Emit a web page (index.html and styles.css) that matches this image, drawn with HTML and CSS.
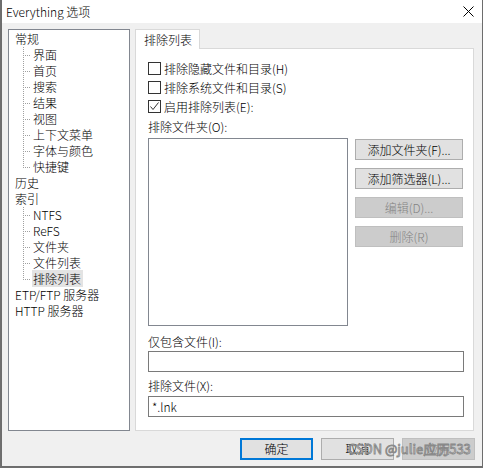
FILE: index.html
```html
<!DOCTYPE html>
<html lang="zh-CN">

<head>
    <meta charset="UTF-8">
    <meta name="viewport" content="width=device-width, initial-scale=1.0">
    <title>Everything 选项</title>
    <link rel="stylesheet" href="styles.css">
</head>

<body>
    <div class="window">
        <div class="titlebar">
            <span class="title">Everything 选项</span>
            <svg class="close" width="11" height="11" viewBox="0 0 11 11">
                <path d="M0.5 0.5 L10.5 10.5 M10.5 0.5 L0.5 10.5" stroke="#000" stroke-width="1" fill="none" />
            </svg>
        </div>

        <div class="client">
            <div class="main">
                <!-- options tree -->
                <div class="tree">
                    <ul>
                        <li>常规
                            <ul class="children">
                                <li>界面</li>
                                <li>首页</li>
                                <li>搜索</li>
                                <li>结果</li>
                                <li>视图</li>
                                <li>上下文菜单</li>
                                <li>字体与颜色</li>
                                <li class="last">快捷键</li>
                            </ul>
                        </li>
                        <li>历史</li>
                        <li>索引
                            <ul class="children">
                                <li>NTFS</li>
                                <li>ReFS</li>
                                <li>文件夹</li>
                                <li>文件列表</li>
                                <li class="last"><span class="selected">排除列表</span></li>
                            </ul>
                        </li>
                        <li>ETP/FTP 服务器</li>
                        <li>HTTP 服务器</li>
                    </ul>
                </div>

                <!-- tab page -->
                <div class="tabs">
                    <div class="tabstrip">
                        <div class="tab">排除列表</div>
                    </div>
                    <div class="page">
                        <div class="check"><span class="box"></span>排除隐藏文件和目录(H)</div>
                        <div class="check"><span class="box"></span>排除系统文件和目录(S)</div>
                        <div class="check">
                            <span class="box">
                                <svg width="11" height="11" viewBox="0 0 11 11">
                                    <path d="M1.5 5.5 L4 8.5 L9.5 1.5" stroke="#333" stroke-width="1" fill="none" />
                                </svg>
                            </span>启用排除列表(E):
                        </div>

                        <div class="label first-label">排除文件夹(O):</div>
                        <div class="folders">
                            <div class="listbox"></div>
                            <div class="side-buttons">
                                <button class="btn">添加文件夹(F)...</button>
                                <button class="btn">添加筛选器(L)...</button>
                                <button class="btn" disabled>编辑(D)...</button>
                                <button class="btn" disabled>删除(R)</button>
                            </div>
                        </div>

                        <div class="label include-label">仅包含文件(I):</div>
                        <div class="textbox include-box"></div>
                        <div class="label exclude-label">排除文件(X):</div>
                        <div class="textbox exclude-box">*.lnk</div>
                    </div>
                </div>
            </div>

            <div class="buttons">
                <button class="btn dialog-btn default">确定</button>
                <button class="btn dialog-btn">取消</button>
                <button class="btn dialog-btn" disabled>应用</button>
            </div>
        </div>

        <div class="watermark">CSDN @julie应历533</div>
    </div>
</body>

</html>
```

FILE: styles.css
```css
body {
    margin: 0;
    padding: 0;
    background-color: #6f6f6f;
    font-family: "Noto Sans CJK SC", sans-serif;
    font-size: 12px;
    font-weight: 300;
    color: #000;
}

.window {
    position: relative;
    box-sizing: border-box;
    width: 482px;
    height: 467px;
    margin-left: 1px;
    background-color: #f0f0f0;
    border: 1px solid #6d6d6d;
    border-top: none;
}

/* title bar */
.titlebar {
    display: flex;
    align-items: center;
    justify-content: space-between;
    height: 23px;
    background-color: #fff;
    padding-left: 4px;
}

.title {
    font-size: 12px;
    line-height: 23px;
}

.close {
    display: block;
    margin-right: 8px;
}

.client {
    padding: 6px 7px 0 6px;
}

.main {
    display: flex;
    gap: 5px;
}

/* tree */
.tree {
    box-sizing: border-box;
    width: 122px;
    height: 402px;
    background-color: #fff;
    border: 1px solid #828790;
    padding-top: 1px;
}

.tree ul {
    list-style: none;
    margin: 0;
    padding: 0;
}

.tree li {
    line-height: 16px;
    padding-left: 6px;
    white-space: nowrap;
}

.tree .children li {
    padding-left: 18px;
    background-image:
        repeating-linear-gradient(to bottom, #a0a0a0 0 1px, transparent 1px 2px),
        repeating-linear-gradient(to right, #a0a0a0 0 1px, transparent 1px 2px);
    background-size: 1px 16px, 8px 1px;
    background-position: 8px 0, 8px 8px;
    background-repeat: no-repeat;
}

.tree .children li.last {
    background-size: 1px 9px, 8px 1px;
}

.selected {
    background-color: #e3e3e3;
    padding: 0 2px 0 1px;
    margin-left: -1px;
}

/* tab control */
.tabs {
    width: 339px;
}

.tabstrip {
    display: flex;
    height: 19px;
}

.tab {
    position: relative;
    box-sizing: border-box;
    width: 65px;
    height: 20px;
    background-color: #fff;
    border: 1px solid #d9d9d9;
    border-bottom: none;
    padding-left: 8px;
    line-height: 19px;
    z-index: 1;
}

.page {
    box-sizing: border-box;
    height: 383px;
    background-color: #fff;
    border: 1px solid #d9d9d9;
    padding: 13px 10px 0 12px;
}

.check {
    display: flex;
    align-items: center;
    height: 13px;
    line-height: 13px;
    margin-bottom: 6px;
}

.box {
    display: flex;
    align-items: center;
    justify-content: center;
    box-sizing: border-box;
    width: 13px;
    height: 13px;
    border: 1px solid #333;
    background-color: #fff;
    margin-right: 3px;
}

.box svg {
    display: block;
}

.label {
    line-height: 16px;
}

.first-label {
    margin-top: 2px;
}

.folders {
    display: flex;
    gap: 7px;
    margin-top: 3px;
}

.listbox {
    box-sizing: border-box;
    width: 200px;
    height: 188px;
    border: 1px solid #828790;
}

.side-buttons {
    display: flex;
    flex-direction: column;
    gap: 8px;
    padding-top: 1px;
}

.btn {
    box-sizing: border-box;
    width: 108px;
    height: 21px;
    padding: 0;
    background-color: #e1e1e1;
    border: 1px solid #adadad;
    font-family: "Noto Sans CJK SC", sans-serif;
    font-size: 12px;
    font-weight: 300;
    line-height: 19px;
    color: #000;
}

.btn:disabled {
    background-color: #cccccc;
    border-color: #bfbfbf;
    color: #838383;
}

.include-label {
    margin-top: 8px;
}

.textbox {
    box-sizing: border-box;
    width: 316px;
    height: 21px;
    border: 1px solid #7a7a7a;
    padding-left: 3px;
    line-height: 19px;
}

.include-box {
    margin-top: 1px;
}

.exclude-label {
    margin-top: 6px;
}

.exclude-box {
    margin-top: 2px;
}

/* OK / Cancel / Apply */
.buttons {
    display: flex;
    justify-content: flex-end;
    gap: 8px;
    margin-top: 7px;
}

.dialog-btn {
    width: 73px;
    height: 22px;
    line-height: 20px;
}

.dialog-btn.default {
    border: 2px solid #0078d7;
    line-height: 18px;
}

.watermark {
    position: absolute;
    left: 346px;
    top: 440px;
    font-size: 13px;
    font-weight: 400;
    line-height: 18px;
    white-space: nowrap;
    color: rgba(255, 255, 255, 0.8);
    -webkit-text-stroke: 0.9px rgba(120, 120, 120, 0.85);
}
```
